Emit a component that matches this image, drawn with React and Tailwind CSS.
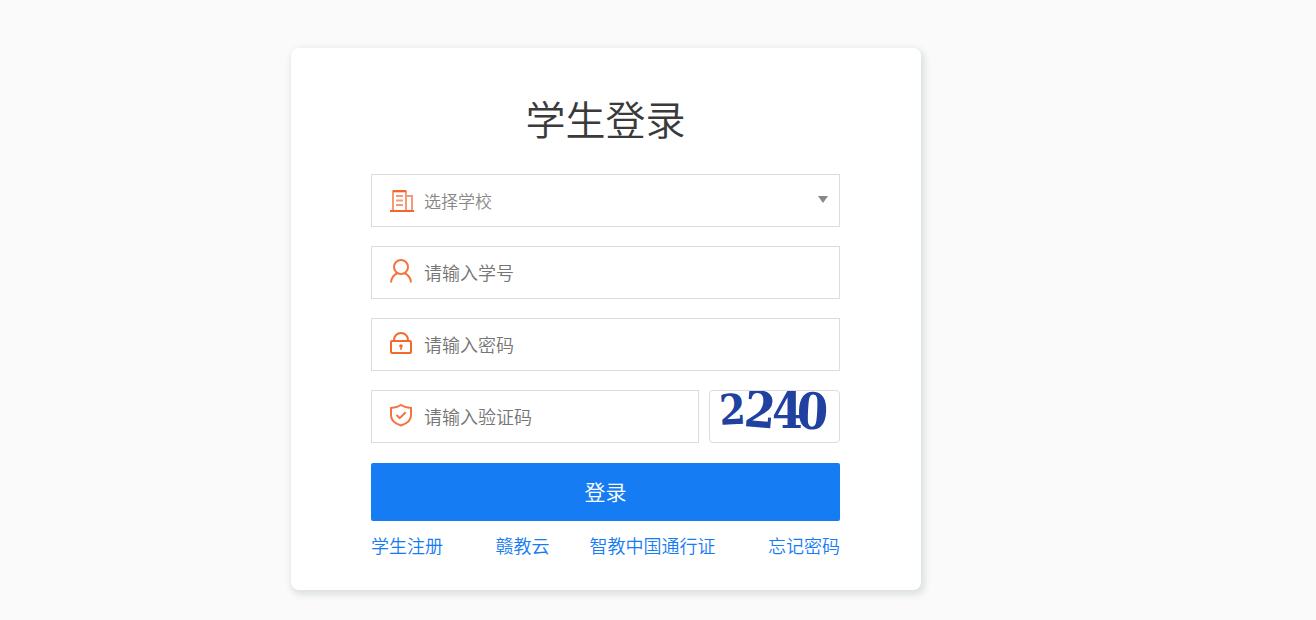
const captcha = [
  { digit: '2', x: 10, y: 34, size: 42, rotate: -3 },
  { digit: '2', x: 33, y: 35, size: 50, rotate: 5 },
  { digit: '4', x: 62, y: 37, size: 50, rotate: 0 },
  { digit: '0', x: 86, y: 37, size: 50, rotate: 3 },
]

function SchoolIcon() {
  return (
    <svg className="mt-1" width="24" height="24" viewBox="0 0 24 24" fill="none" stroke="#f59a74" strokeWidth="2" aria-hidden="true">
      <path d="M3 22V2.500h13V22M16 7h6v15" />
      <path d="M6 7h7M6 11.500h7M6 16h7" />
      <path d="M3 2h13M0 22h24" stroke="#f2662b" />
    </svg>
  )
}

function UserIcon() {
  return (
    <svg width="24" height="24" viewBox="0 0 24 24" fill="none" stroke="#f47340" strokeWidth="2" aria-hidden="true">
      <circle cx="11" cy="8" r="7" />
      <path d="M1 23.500c.3-4.500 2.500-7.500 6.500-9.500M14.500 14c4 2 6.200 5 6.500 9.500" />
    </svg>
  )
}

function LockIcon() {
  return (
    <svg width="24" height="24" viewBox="0 0 24 24" fill="none" stroke="#f26a30" strokeWidth="2" aria-hidden="true">
      <rect x="1" y="10" width="20" height="12" rx="1" />
      <path d="M4 10V9a7 7 0 0 1 14 0v1" />
      <circle cx="11" cy="15" r="1.800" fill="#f26a30" stroke="none" />
      <path d="M11 15v4" strokeWidth="1.500" />
    </svg>
  )
}

function ShieldIcon() {
  return (
    <svg width="24" height="24" viewBox="0 0 24 24" fill="none" stroke="#f47340" strokeWidth="2" aria-hidden="true">
      <path d="M11 2c3 2 6 3 10 3v7.500c0 5-4 8-10 10-6-2-10-5-10-10V5c4 0 7-1 10-3z" />
      <path d="M6.500 12l3.200 3.200 6-6" />
    </svg>
  )
}

function Field({ id, label, icon, children }) {
  return (
    <div className="relative flex h-[53px] min-w-0 grow items-center border border-[#dcdcdc] pl-[18px]">
      <label htmlFor={id} aria-label={label} className="mr-[10px] shrink-0 pb-1">
        {icon}
      </label>
      {children}
    </div>
  )
}

function TextInput({ id, label, type = 'text', placeholder }) {
  return (
    <input
      id={id}
      type={type}
      aria-label={label}
      placeholder={placeholder}
      className="h-full min-w-0 grow bg-transparent pb-0.5 text-[18px] text-[#333] outline-none placeholder:text-[#757575]"
    />
  )
}

function Captcha() {
  return (
    <button
      type="button"
      aria-label="刷新验证码"
      className="h-[53px] w-[131px] shrink-0 overflow-hidden rounded-[4px] border border-[#dcdcdc]"
    >
      <svg
        width="129"
        height="51"
        viewBox="0 0 129 51"
        fill="#2041a0"
        className="font-['DejaVu_Serif_Condensed','DejaVu_Serif',serif] font-bold"
      >
        {captcha.map(({ digit, x, y, size, rotate }) => (
          <text key={x} x={x} y={y} fontSize={size} rotate={rotate}>
            {digit}
          </text>
        ))}
      </svg>
    </button>
  )
}

export default function App() {
  return (
    <div className="flex min-h-screen items-start justify-center bg-[#fafafa] pt-12 pr-26 pb-7 font-['Noto_Sans_CJK_SC',sans-serif] font-[350]">
      <form className="w-full max-w-[630px] rounded-[8px] bg-white pt-11 pr-[81px] pb-[31px] pl-20 shadow-[2px_3px_6px_2px_#dde2e1]">
        <h1 className="text-center text-[40px] leading-[52px] font-[350] text-[#3a3a3a]">学生登录</h1>

        <div className="mt-[30px] flex flex-col gap-[19px]">
          <Field id="school" label="学校" icon={<SchoolIcon />}>
            <select
              id="school"
              aria-label="学校"
              className="h-full min-w-0 grow appearance-none bg-transparent text-[17px] font-[350] text-[#888] outline-none"
            >
              <option>选择学校</option>
            </select>
            <svg
              width="10"
              height="8"
              viewBox="0 0 10 8"
              fill="#888"
              className="pointer-events-none absolute top-5 right-[11px]"
              aria-hidden="true"
            >
              <path d="M0 1h10L5 8z" />
            </svg>
          </Field>
          <Field id="student" label="学号" icon={<UserIcon />}>
            <TextInput id="student" label="学号" placeholder="请输入学号" />
          </Field>
          <Field id="password" label="密码" icon={<LockIcon />}>
            <TextInput id="password" label="密码" type="password" placeholder="请输入密码" />
          </Field>
          <div className="flex gap-[10px]">
            <Field id="code" label="验证码" icon={<ShieldIcon />}>
              <TextInput id="code" label="验证码" placeholder="请输入验证码" />
            </Field>
            <Captcha />
          </div>
        </div>

        <button
          type="submit"
          className="mt-5 h-[58px] w-full rounded-[2px] bg-[#167cf4] text-[21px] font-[350] text-white"
        >
          登录
        </button>

        <nav className="mt-[10px] flex justify-between text-[18px] leading-[28px] text-[#167cf4]">
          <a href="#register">学生注册</a>
          <div className="flex gap-10">
            <a href="#ganjiaoyun">赣教云</a>
            <a href="#passport">智教中国通行证</a>
          </div>
          <a href="#forgot">忘记密码</a>
        </nav>
      </form>
    </div>
  )
}
